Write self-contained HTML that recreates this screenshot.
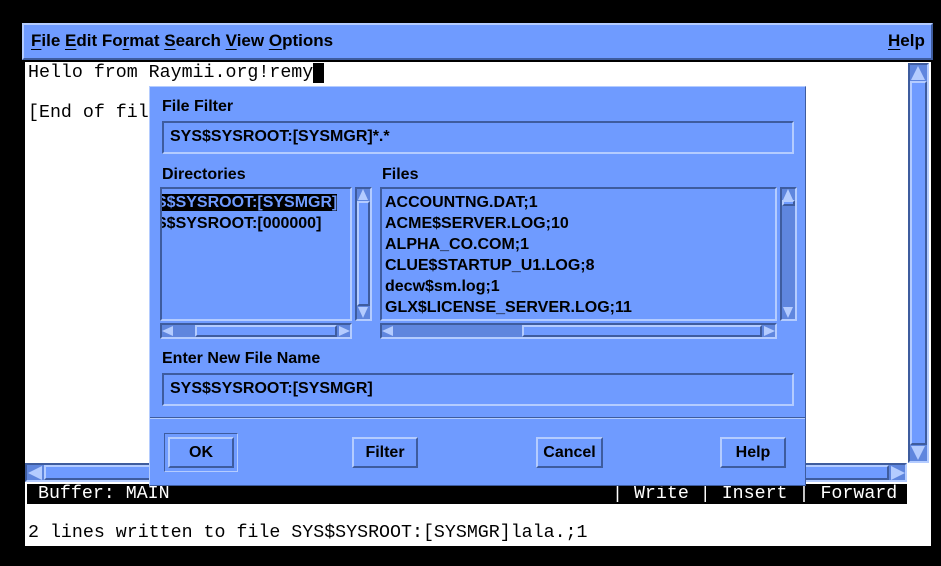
<!DOCTYPE html>
<html><head><meta charset="utf-8"><style>
*{margin:0;padding:0;box-sizing:border-box}
body{width:941px;height:566px;background:#000;position:relative;overflow:hidden;font-family:"Liberation Sans",sans-serif}
.a{position:absolute}
.bl{background:#6f9bff}
.out{border:2px solid;border-color:#b4ccff #3e5c9e #3e5c9e #b4ccff}
.in{border:2px solid;border-color:#3e5c9e #b4ccff #b4ccff #3e5c9e}
.tr{background:#5f86de}
.mono{font-family:"Liberation Mono",monospace;font-size:18.3px;color:#000}
.lab{font-weight:bold;font-size:16px;color:#000}
.u{text-decoration:underline;text-underline-offset:3px}
.btn{position:absolute;top:437px;height:31px;font-weight:bold;font-size:16px;text-align:center;line-height:27px}
.tri{position:absolute;width:0;height:0}
</style></head><body>
<div class="a bl out" style="left:22px;top:23px;width:911px;height:37px"></div>
<div class="a" style="left:31px;top:31px;font-size:17px;font-weight:bold;color:#000"><span class="u">F</span>ile&nbsp;<span class="u">E</span>dit&nbsp;Fo<span class="u">r</span>mat&nbsp;<span class="u">S</span>earch&nbsp;<span class="u">V</span>iew&nbsp;<span class="u">O</span>ptions</div>
<div class="a" style="left:888px;top:31px;font-size:17px;font-weight:bold;color:#000"><span class="u">H</span>elp</div>
<div class="a" style="left:25px;top:62px;width:906px;height:484px;background:#fff"></div>
<div class="a mono" style="left:28px;top:63px">Hello from Raymii.org!remy<span style="background:#000">&nbsp;</span></div>
<div class="a mono" style="left:28px;top:103px">[End of fil</div>
<div class="a tr in" style="left:908px;top:63px;width:21px;height:400px"></div>
<div class="a bl out" style="left:910px;top:81px;width:17px;height:364px"></div>
<div class="tri" style="left:911px;top:66px;border-left:7px solid transparent;border-right:7px solid transparent;border-bottom:14px solid #b4ccff"></div>
<div class="tri" style="left:911px;top:446px;border-left:7px solid transparent;border-right:7px solid transparent;border-top:14px solid #b4ccff"></div>
<div class="a tr in" style="left:25px;top:463px;width:882px;height:19px"></div>
<div class="a bl out" style="left:44px;top:465px;width:845px;height:15px"></div>
<div class="tri" style="left:28px;top:466px;border-top:7px solid transparent;border-bottom:7px solid transparent;border-right:14px solid #b4ccff"></div>
<div class="tri" style="left:891px;top:466px;border-top:7px solid transparent;border-bottom:7px solid transparent;border-left:14px solid #b4ccff"></div>
<div class="a mono" style="left:27px;top:484px;width:880px;height:20px;background:#000;color:#fff;line-height:20px;white-space:pre;font-size:18.3px"> Buffer: MAIN</div>
<div class="a mono" style="left:612px;top:484px;color:#fff;line-height:20px;white-space:pre;font-size:18.3px">| Write | Insert | Forward</div>
<div class="a mono" style="left:28px;top:523px;white-space:pre">2 lines written to file SYS$SYSROOT:[SYSMGR]lala.;1</div>
<div class="a bl" style="left:149px;top:86px;width:657px;height:400px;border:1px solid;border-color:#b4ccff #3e5c9e #3e5c9e #b4ccff"></div>
<div class="a lab" style="left:162px;top:98px">File Filter</div>
<div class="a in" style="left:162px;top:121px;width:632px;height:33px"></div>
<div class="a lab" style="left:170px;top:128px">SYS$SYSROOT:[SYSMGR]*.*</div>
<div class="a lab" style="left:162px;top:166px">Directories</div>
<div class="a lab" style="left:382px;top:166px">Files</div>
<div class="a in" style="left:160px;top:187px;width:192px;height:134px;overflow:hidden">
 <div class="lab" style="position:absolute;left:-6px;top:3px;line-height:21px;white-space:nowrap"><span style="background:#000;color:#6f9bff">S$SYSROOT:[SYSMGR]</span><br>S$SYSROOT:[000000]</div>
</div>
<div class="a tr in" style="left:355px;top:187px;width:17px;height:134px"></div>
<div class="a bl out" style="left:357px;top:201px;width:13px;height:105px"></div>
<div class="tri" style="left:358px;top:189px;border-left:5px solid transparent;border-right:5px solid transparent;border-bottom:11px solid #b4ccff"></div>
<div class="tri" style="left:358px;top:307px;border-left:5px solid transparent;border-right:5px solid transparent;border-top:11px solid #b4ccff"></div>
<div class="a tr in" style="left:160px;top:323px;width:192px;height:16px"></div>
<div class="a bl out" style="left:195px;top:325px;width:142px;height:12px"></div>
<div class="tri" style="left:162px;top:326px;border-top:5px solid transparent;border-bottom:5px solid transparent;border-right:11px solid #b4ccff"></div>
<div class="tri" style="left:339px;top:326px;border-top:5px solid transparent;border-bottom:5px solid transparent;border-left:11px solid #b4ccff"></div>
<div class="a in" style="left:380px;top:187px;width:397px;height:134px;overflow:hidden">
 <div class="lab" style="position:absolute;left:3px;top:3px;line-height:21px;white-space:nowrap">ACCOUNTNG.DAT;1<br>ACME$SERVER.LOG;10<br>ALPHA_CO.COM;1<br>CLUE$STARTUP_U1.LOG;8<br>decw$sm.log;1<br>GLX$LICENSE_SERVER.LOG;11</div>
</div>
<div class="a tr in" style="left:780px;top:187px;width:17px;height:134px"></div>
<div class="a bl out" style="left:782px;top:200px;width:13px;height:6px"></div>
<div class="tri" style="left:783px;top:189px;border-left:5px solid transparent;border-right:5px solid transparent;border-bottom:11px solid #b4ccff"></div>
<div class="tri" style="left:783px;top:307px;border-left:5px solid transparent;border-right:5px solid transparent;border-top:11px solid #b4ccff"></div>
<div class="a tr in" style="left:380px;top:323px;width:397px;height:16px"></div>
<div class="a bl out" style="left:522px;top:325px;width:240px;height:12px"></div>
<div class="tri" style="left:382px;top:326px;border-top:5px solid transparent;border-bottom:5px solid transparent;border-right:11px solid #b4ccff"></div>
<div class="tri" style="left:764px;top:326px;border-top:5px solid transparent;border-bottom:5px solid transparent;border-left:11px solid #b4ccff"></div>
<div class="a lab" style="left:162px;top:350px">Enter New File Name</div>
<div class="a in" style="left:162px;top:373px;width:632px;height:33px"></div>
<div class="a lab" style="left:170px;top:380px">SYS$SYSROOT:[SYSMGR]</div>
<div class="a" style="left:150px;top:417px;width:655px;height:2px;border-top:1px solid #3e5c9e;border-bottom:1px solid #b4ccff"></div>
<div class="a" style="left:164px;top:433px;width:74px;height:39px;border:1px solid;border-color:#3e5c9e #b4ccff #b4ccff #3e5c9e"></div>
<div class="btn bl out" style="left:168px;width:66px">OK</div>
<div class="btn bl out" style="left:352px;width:66px">Filter</div>
<div class="btn bl out" style="left:536px;width:67px">Cancel</div>
<div class="btn bl out" style="left:720px;width:66px">Help</div>
</body></html>
